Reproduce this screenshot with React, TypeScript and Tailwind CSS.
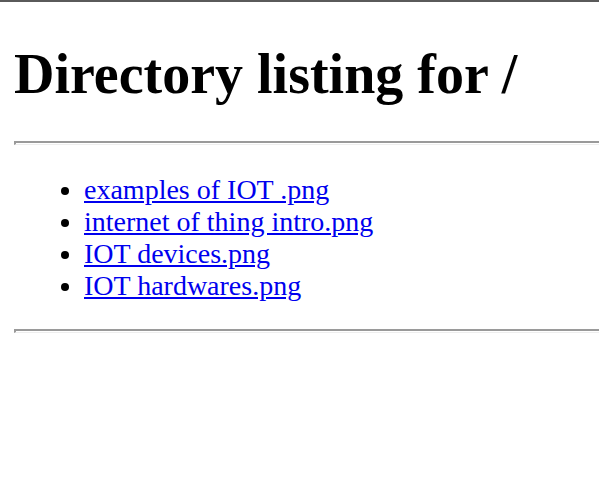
export default function App() {
  const files = [
    "examples of IOT .png",
    "internet of thing intro.png",
    "IOT devices.png",
    "IOT hardwares.png",
  ];
  const Hr = () => (
    <div className="ml-[14px] h-[4px] border-t-[2px] border-l-[2px] border-t-[#9a9a9a] border-l-[#9a9a9a] border-b-[1px] border-b-[#eeeeee] box-border" />
  );
  return (
    <div
      className="min-h-[482px] bg-white text-black"
      style={{ fontFamily: '"Liberation Serif", "Times New Roman", serif' }}
    >
      <div className="h-[2px] bg-[#5a5a5a]" />
      <h1 className="ml-[14px] pt-[40px] pb-[35px] text-[56px] font-bold leading-[64px]">
        Directory listing for /
      </h1>
      <Hr />
      <ul className="ml-[14px] pl-[70px] pt-[29px] pb-[27px] text-[28px] leading-[32px] list-disc">
        {files.map((f) => (
          <li key={f}>
            <a href="#" className="text-[#0000ee] underline">
              {f}
            </a>
          </li>
        ))}
      </ul>
      <Hr />
    </div>
  );
}
